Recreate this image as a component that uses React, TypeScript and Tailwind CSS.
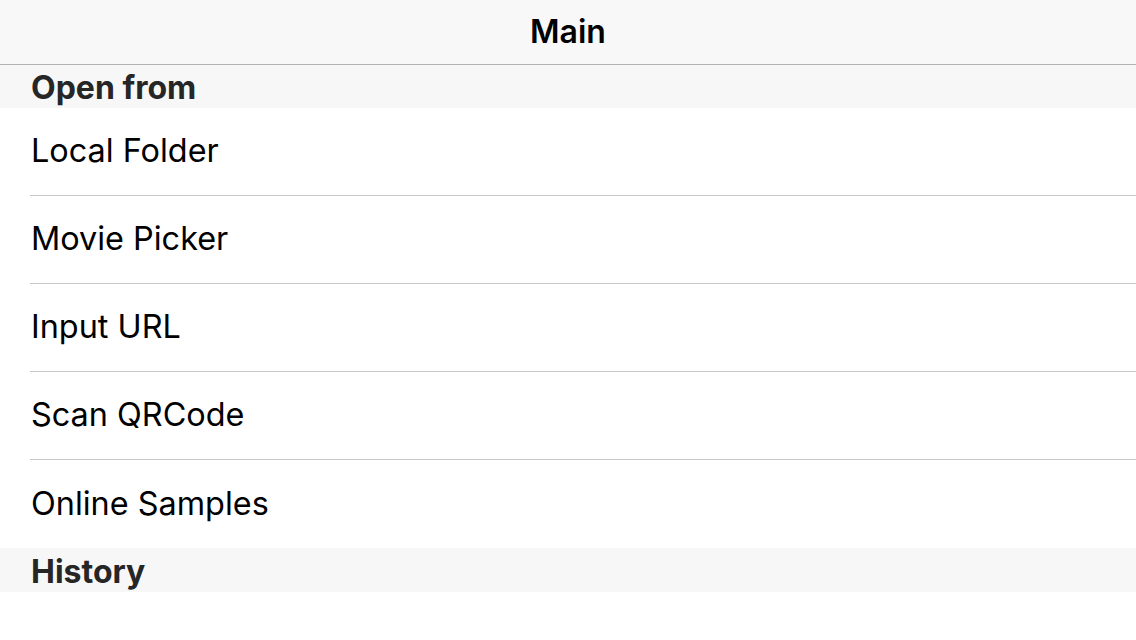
const sources = ["Local Folder", "Movie Picker", "Input URL", "Scan QRCode", "Online Samples"];

const SectionHeader = ({ title, tall }: { title: string; tall?: boolean }) => (
  <div className={(tall ? "h-[44px] " : "h-[43px] ") + "bg-[#f7f7f7] pl-[31px] flex items-end"}>
    <h2 className="text-[32px] leading-[40px] font-bold text-[#262626]">{title}</h2>
  </div>
);

export default function App() {
  return (
    <div className="w-[1136px] h-[640px] bg-white overflow-hidden" style={{ fontFamily: "Inter, 'Noto Sans', sans-serif" }}>
      <header className="h-[65px] bg-[#f8f8f8] border-b border-[#b2b2b2] flex items-center justify-center">
        <h1 className="text-[32px] font-semibold text-black">Main</h1>
      </header>

      <SectionHeader title="Open from" />
      <ul>
        {sources.map((s, i) => (
          <li key={s} className="pl-[30px]">
            <div
              className={
                "h-[88px] flex items-center pl-[1px] text-[32.4px] text-black " +
                (i < sources.length - 1 ? "border-b border-[#c8c7cc]" : "")
              }
            >
              {s}
            </div>
          </li>
        ))}
      </ul>

      <SectionHeader title="History" tall />
    </div>
  );
}
